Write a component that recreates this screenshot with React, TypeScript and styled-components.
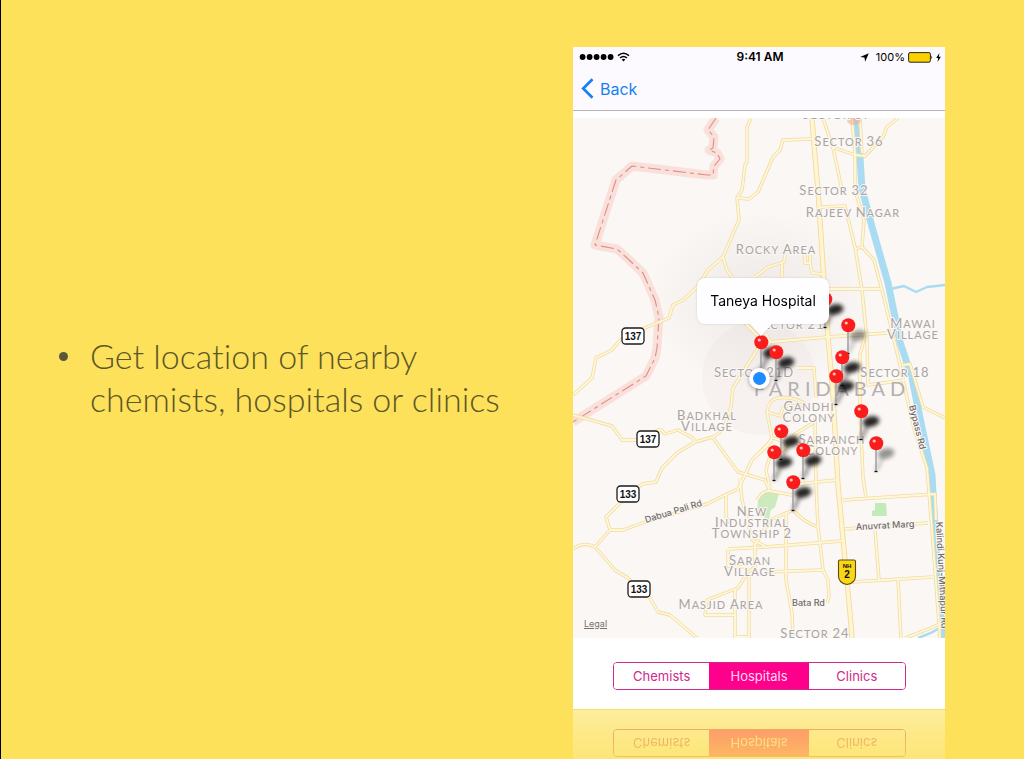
import React, { useState } from "react";
import styled, { createGlobalStyle } from "styled-components";

const GlobalStyle = createGlobalStyle`
  *, *::before, *::after { box-sizing: border-box; }
  html, body { margin: 0; padding: 0; }
  body { background: #fde15b; }
  button { font: inherit; }
`;

const Slide = styled.main`
  display: grid;
  grid-template-columns: minmax(0, 1fr) minmax(0, 372px);
  height: 100vh;
  padding: 47px 79px 0 0;
  overflow: hidden;
  background: #fde15b;
  border-left: 1px solid #000;
`;

const Points = styled.ul`
  align-self: center;
  margin: 0;
  padding: 0 24px 0 58px;
  list-style: none;
`;

const Point = styled.li`
  display: flex;
  gap: 22px;
  padding-bottom: 74px;
  color: #5c5628;
  font: 300 34px/43px Lato, sans-serif;
  font-variant-ligatures: none;
`;

const Bullet = styled.span`
  flex: none;
  width: 9px;
  height: 9px;
  margin-top: 18px;
  border-radius: 50%;
  background: #5b583a;
`;

const PointText = styled.p`
  margin: 0;
  max-width: 450px;
`;

const PhoneColumn = styled.div`
  display: flex;
  flex-direction: column;
`;

const Phone = styled.section`
  flex: none;
  background: #fff;
  font-family: Inter, sans-serif;
`;

const TopBar = styled.header`
  height: 64px;
  background: #fcfafe;
  border-bottom: 1px solid #b5b2b8;
`;

const StatusBar = styled.div`
  display: grid;
  grid-template-columns: 1fr auto 1fr;
  align-items: center;
  height: 20px;
  padding: 0 4px 0 6px;
  color: #000;
`;

const StatusGroup = styled.div<{ $end?: boolean }>`
  display: flex;
  align-items: center;
  justify-content: ${(p) => (p.$end ? "flex-end" : "flex-start")};
  gap: 3px;
`;

const Clock = styled.time`
  font-size: 12px;
  line-height: 20px;
  font-weight: 600;
`;

const Percent = styled.span`
  padding-left: 4px;
  font-size: 11px;
  line-height: 20px;
`;

const BackButton = styled.button`
  display: flex;
  align-items: center;
  gap: 6px;
  height: 43px;
  padding: 0 8px;
  border: 0;
  background: none;
  color: #1680f6;
  font-size: 16px;
`;

const MapArea = styled.div`
  position: relative;
  height: 520px;
  margin-top: 7px;
  overflow: hidden;
  background: #fbf7f4;
`;

const MapDrawing = styled.svg`
  display: block;
  width: 372px;
  height: 520px;
`;

const PinButton = styled.button<{ $x: number; $y: number }>`
  position: absolute;
  left: ${(p) => p.$x - 8}px;
  top: ${(p) => p.$y - 8}px;
  width: 34px;
  height: 40px;
  padding: 0;
  border: 0;
  background: none;

  svg { display: block; }
`;

const Callout = styled.div`
  position: absolute;
  left: 124px;
  top: 160px;
  display: flex;
  align-items: center;
  justify-content: center;
  width: 132px;
  height: 46px;
  padding-bottom: 2px;
  border-radius: 8px;
  background: #fefdff;
  color: #000;
  font-size: 14px;
  filter: drop-shadow(0 0 1px rgba(80, 70, 60, 0.2));

  &::after {
    content: "";
    position: absolute;
    top: 100%;
    left: 53px;
    border: 11px solid transparent;
    border-top: 12px solid #fefdff;
    border-bottom: 0;
  }
`;

const UserDot = styled.span`
  position: absolute;
  left: 176px;
  top: 250px;
  width: 21px;
  height: 21px;
  border: 4px solid #fff;
  border-radius: 50%;
  background: #1e8cff;
  box-shadow: 0 1px 4px rgba(0, 0, 0, 0.35);
`;

const LegalLink = styled.a`
  position: absolute;
  left: 11px;
  bottom: 8px;
  color: #77726e;
  font-size: 9px;
  line-height: 13px;
`;

const Footer = styled.div`
  display: flex;
  justify-content: center;
  height: 71px;
  padding: 24px 39px 0 40px;
  background: #fff;
  font-family: Inter, sans-serif;
`;

const Segments = styled.div`
  display: grid;
  grid-template-columns: 96fr 100fr 97fr;
  width: 100%;
  height: 28px;
  overflow: hidden;
  border: 1px solid #d0298c;
  border-radius: 4px;
`;

const Segment = styled.button<{ $active: boolean }>`
  padding: 0;
  border: 0;
  background: ${(p) => (p.$active ? "#ff008c" : "#fff")};
  color: ${(p) => (p.$active ? "#ffd9ef" : "#d0298c")};
  font-size: 13px;
  line-height: 26px;
`;

const Reflection = styled.div`
  flex: none;
  border-bottom: 1px solid #efd978;
  transform: scaleY(-1);
  mask-image: linear-gradient(to top, rgba(0, 0, 0, 0.42), rgba(0, 0, 0, 0.3) 28%, rgba(0, 0, 0, 0.18) 68%, rgba(0, 0, 0, 0.1));
`;

/* The map uses its own coordinate space, starting at 573,118. */
const ORIGIN_X = 573;
const ORIGIN_Y = 118;

const roads = [
  "M751 118L747 127V162L745 165L742 190L737 198L739 220L723 257L708 270L697 287L683 300L673 305L669 318L647 327L620 340L612 350L596 358L592 378L573 395",
  "M737 198L749 199L758 192L773 157L780 150L783 140L813 139",
  "M723 257L727 270L732 277L745 323L760 338L757 350L733 388L731 407L725 425Q720 434 713 437L695 442L677 453L662 468L656 482L642 484L618 505L606 517L610 530L595 547",
  "M610 530H623L645 522L707 504L725 495L738 489L745 475L752 460L772 440",
  "M573 549Q584 541 595 547L615 570L628 578L650 598L658 612L670 615L697 638",
  "M573 415L612 426L622 440H637L655 433Q659 426 665 434L678 430L693 438L695 442",
  "M713 438L738 472L765 480L770 491L792 495",
  "M755 457L768 445L772 438L767 412Q768 401 777 398Q792 396 804 403M767 412L780 416L783 408Q793 402 804 410",
  "M797 368L814 368L816 398",
  "M770 342L828 337L887 333M770 342L766 334",
  "M823 118L833 148L842 190M820 207L845 206L855 247L862 290L867 340L868 385L905 380M865 335L860 355V412L863 478L866 497",
  "M852 118L855 153V190L864 220L862 247L855 249M862 247L874 260L882 290L890 323L900 365L907 398L915 432L927 468L932 530L937 597L940 638",
  "M860 118L862 153M832 147L855 155L865 156L883 137L887 127L898 118",
  "M828 289H882",
  "M785 255L784 262L768 267L755 277M782 262V278M805 255V263H810L812 273L823 274M810 255V263",
  "M902 365L910 364L923 407L945 418",
  "M815 418L816 483L818 527L820 543L823 570L828 580L829 597L827 603",
  "M773 446L766 470L770 488M773 438L788 443L795 434L813 423M781 452L792 440L806 448",
  "M757 500Q763 490 770 491M793 510L770 520M793 510Q805 523 818 527M800 484L817 482L837 480",
  "M728 549L765 547L842 541M786 513V580L792 613L793 638M765 572L822 570",
  "M843 500L935 494L936 520M845 529L928 523M875 530L879 580M852 582L933 577M898 579L901 638M905 638Q924 631 940 624",
  "M740 478L742 500L746 515L752 540L765 546M726 495V517L731 524M728 549V566L748 567M755 543V567L748 572L738 588L707 600L705 615H735M749 577V637H735V590",
  "M770 520L755 545",
];
const highway =
  "M812 118L815 157L818 190L823 267L828 337L833 395L838 485L845 560L850 613L852 638";
const border =
  "M716 118L708 130L714 137L713 148L709 150L717 153L720 159L714 166L713 175H707L632 166L616 180L595 245L617 249L627 258L643 273L655 300L659 317L657 348L655 358L646 376L573 422";
const canal =
  "M854 118L860 157L862 190L865 200L872 227L888 283L895 317L900 342L912 378L920 418L932 475L935 530L938 580L943 638";

type Place = { x: number; y: number; lines: string[] };

const places: Place[] = [
  { x: 837, y: 119, lines: ["Sector 37"] },
  { x: 849, y: 146, lines: ["Sector 36"] },
  { x: 834, y: 195, lines: ["Sector 32"] },
  { x: 853, y: 217, lines: ["Rajeev Nagar"] },
  { x: 776, y: 254, lines: ["Rocky Area"] },
  { x: 790, y: 329, lines: ["Sector 21"] },
  { x: 913, y: 328, lines: ["Mawai", "Village"] },
  { x: 754, y: 377, lines: ["Sector 21D"] },
  { x: 895, y: 377, lines: ["Sector 18"] },
  { x: 707, y: 420, lines: ["Badkhal", "Village"] },
  { x: 809, y: 411, lines: ["Gandhi", "Colony"] },
  { x: 832, y: 444, lines: ["Sarpanch", "Colony"] },
  { x: 752, y: 516, lines: ["New", "Industrial", "Township 2"] },
  { x: 750, y: 565, lines: ["Saran", "Village"] },
  { x: 721, y: 609, lines: ["Masjid Area"] },
  { x: 815, y: 638, lines: ["Sector 24"] },
];

const PlaceText = styled.text<{ $city?: boolean }>`
  fill: ${(p) => (p.$city ? "#b4b0af" : "#a9a5a4")};
  stroke: #fbf7f4;
  stroke-width: ${(p) => (p.$city ? 0 : 2)}px;
  stroke-linejoin: round;
  paint-order: stroke;
  text-anchor: middle;
  font-family: Lato, sans-serif;
  font-size: ${(p) => (p.$city ? 20 : 11)}px;
  letter-spacing: ${(p) => (p.$city ? 5 : 1)}px;
`;

const Initial = styled.tspan`
  font-size: 13px;
`;

const RoadText = styled.text`
  fill: #6f6b68;
  stroke: #fbf7f4;
  stroke-width: 2px;
  paint-order: stroke;
  font-family: Inter, sans-serif;
  font-size: 9px;
  font-weight: 500;
`;

const ShieldText = styled.text<{ $size: number }>`
  fill: #111;
  text-anchor: middle;
  font-family: "Liberation Sans", sans-serif;
  font-size: ${(p) => p.$size}px;
  font-weight: 700;
`;

function PlaceLabel({ x, y, lines }: Place) {
  return (
    <>
      {lines.map((line, i) => (
        <PlaceText key={line} x={x} y={y + i * 11}>
          {line.split(" ").map((word, j) => (
            <React.Fragment key={word}>
              {j > 0 && " "}
              {/\d/.test(word) ? (
                <Initial>{word}</Initial>
              ) : (
                <>
                  <Initial>{word[0]}</Initial>
                  {word.slice(1).toUpperCase()}
                </>
              )}
            </React.Fragment>
          ))}
        </PlaceText>
      ))}
    </>
  );
}

function RouteBadge({ x, y, label }: { x: number; y: number; label: string }) {
  return (
    <g>
      <rect x={x - 11} y={y - 8} width="22" height="16" rx="3.5" fill="#fff" stroke="#1b1b1b" strokeWidth="1.3" />
      <ShieldText $size={10} x={x} y={y + 4}>{label}</ShieldText>
    </g>
  );
}

function CityMap() {
  return (
    <MapDrawing viewBox={`${ORIGIN_X} ${ORIGIN_Y} 372 520`} role="img" aria-label="Map of Faridabad">
      <defs>
        <radialGradient id="shade">
          <stop offset="0" stopColor="#8a7f78" stopOpacity="0.12" />
          <stop offset="1" stopColor="#8a7f78" stopOpacity="0" />
        </radialGradient>
      </defs>
      <ellipse cx="762" cy="300" rx="115" ry="90" fill="url(#shade)" />
      <circle cx="759" cy="378" r="57" fill="#8d8a92" fillOpacity="0.04" />
      <path d="M763 493L771 491L779 494L775 507L771 510L769 519L757 515L758 500Z" fill="#cdeabf" />
      <path d="M875 503H886L887 516H872L872 511L875 510Z" fill="#c3eab9" />
      <g fill="none" strokeLinejoin="round">
        <path d={border} stroke="#fae0da" strokeWidth="9" />
        <path d={border} stroke="#dc8f87" strokeWidth="1.1" strokeDasharray="13 4 4 4" />
        <path d={canal} stroke="#a9dcf2" strokeWidth="7" />
        <path d="M890 289L904 286L916 292L927 287L945 285" stroke="#a9dcf2" strokeWidth="2.4" />
        <path d="M918 638Q930 634 940 628" stroke="#a9dcf2" strokeWidth="2.5" />
        {roads.map((d) => (
          <path key={d} d={d} stroke="#f2dba2" strokeWidth="3.4" />
        ))}
        <path d={highway} stroke="#f2d79b" strokeWidth="5.2" />
        {roads.map((d) => (
          <path key={d} d={d} stroke="#fef8da" strokeWidth="1.8" />
        ))}
        <path d={highway} stroke="#fff6cf" strokeWidth="3.6" />
      </g>
      <ellipse cx="854" cy="121" rx="7" ry="4" fill="#f2a58c" fillOpacity="0.5" />
      {places.map((place) => (
        <PlaceLabel key={`${place.x}-${place.y}`} {...place} />
      ))}
      <PlaceText $city x="832" y="396">FARIDABAD</PlaceText>
      <RoadText transform="translate(646 523) rotate(-17)">Dabua Pali Rd</RoadText>
      <RoadText transform="translate(856 530) rotate(-3)">Anuvrat Marg</RoadText>
      <RoadText x="792" y="606">Bata Rd</RoadText>
      <RoadText transform="translate(909 406) rotate(76)">Bypass Rd</RoadText>
      <RoadText transform="translate(936 522) rotate(87)">Kalindi Kunj-Mithapur Rd</RoadText>
      <RouteBadge x={633} y={336} label="137" />
      <RouteBadge x={648} y={439} label="137" />
      <RouteBadge x={628} y={494} label="133" />
      <RouteBadge x={639} y={589} label="133" />
      <path d="M838.5 561.5Q838.5 560 840 560H854Q855.5 560 855.5 561.5V576Q855.5 583 847 584.5Q838.5 583 838.5 576Z" fill="#f9d616" stroke="#5c4a10" strokeWidth="1.1" />
      <ShieldText $size={6} x="847" y="568">NH</ShieldText>
      <ShieldText $size={10} x="847" y="578">2</ShieldText>
    </MapDrawing>
  );
}

const pins = [
  { name: "Hospital near Sector 21", x: 825, y: 299 },
  { name: "Hospital near Mawai Village", x: 848, y: 325, faint: true },
  { name: "Taneya Hospital", x: 761, y: 342 },
  { name: "Hospital near Sector 21D", x: 776, y: 352 },
  { name: "Hospital near Sector 18", x: 842, y: 357 },
  { name: "Hospital in Faridabad", x: 836, y: 376 },
  { name: "Hospital on Bypass Road", x: 861, y: 411 },
  { name: "Hospital in Gandhi Colony", x: 781, y: 431 },
  { name: "Hospital east of Sarpanch Colony", x: 876, y: 443, faint: true },
  { name: "Hospital in Sarpanch Colony", x: 803, y: 450 },
  { name: "Hospital west of Sarpanch Colony", x: 774, y: 452 },
  { name: "Hospital near New Industrial Township", x: 793, y: 482 },
];

function Pin({ name, x, y, faint }: { name: string; x: number; y: number; faint?: boolean }) {
  return (
    <PinButton type="button" aria-label={name} $x={x - ORIGIN_X} $y={y - ORIGIN_Y}>
      <svg width="34" height="40" viewBox="0 0 34 40" aria-hidden="true">
        <g filter="url(#pin-shadow)" opacity={faint ? 0.4 : 0.85}>
          <path d="M8 36L16 20" stroke="#000" strokeWidth="3" opacity="0.6" />
          <ellipse cx="18" cy="18.5" rx="8.5" ry="5.2" transform="rotate(-12 18 18.5)" />
        </g>
        <path d="M8 14V36" stroke="#a3a3a8" strokeWidth="1.6" />
        <path d="M6.5 36.5H9.5" stroke="#111" strokeWidth="1.3" />
        <circle cx="8.3" cy="8.3" r="7" fill="#fb1c1c" />
        <circle cx="6.2" cy="6" r="1.6" fill="#ffc4c0" />
      </svg>
    </PinButton>
  );
}

const PinDefs = styled.svg`
  position: absolute;
  width: 0;
  height: 0;
`;

const kinds = ["Chemists", "Hospitals", "Clinics"];

function KindPicker({ value, onPick }: { value: string; onPick: (kind: string) => void }) {
  return (
    <Footer>
      <Segments role="group" aria-label="Kind of place">
        {kinds.map((kind) => (
          <Segment key={kind} type="button" $active={kind === value} aria-pressed={kind === value} onClick={() => onPick(kind)}>
            {kind}
          </Segment>
        ))}
      </Segments>
    </Footer>
  );
}

function Status() {
  return (
    <StatusBar>
      <StatusGroup>
        <svg width="35" height="8" viewBox="0 0 35 8" aria-label="Full signal">
          {[3, 10, 17, 24, 31].map((cx) => (
            <circle key={cx} cx={cx + 0.6} cy="4" r="2.9" />
          ))}
        </svg>
        <svg width="13" height="10" viewBox="0 0 13 10" aria-label="Wi-Fi">
          <path d="M1 3.6Q6.5 -1 12 3.6M3.1 5.9Q6.5 3 9.9 5.9" fill="none" stroke="#000" strokeWidth="1.5" />
          <path d="M4.7 7.5Q6.5 6 8.3 7.5L6.5 9.4Z" />
        </svg>
      </StatusGroup>
      <Clock>9:41 AM</Clock>
      <StatusGroup $end>
        <svg width="9" height="9" viewBox="0 0 9 9" aria-label="Location in use">
          <path d="M8.8 .3L5.1 8.8L4.5 4.6L.2 4.1Z" />
        </svg>
        <Percent>100%</Percent>
        <svg width="25" height="11" viewBox="0 0 25 11" aria-label="Battery full">
          <rect x=".6" y=".6" width="21.8" height="9.6" rx="1.5" fill="#fbd000" stroke="#222" strokeWidth="1" />
          <path d="M23.4 3.6Q25 5.4 23.4 7.2Z" />
        </svg>
        <svg width="5" height="9" viewBox="0 0 5 9" aria-label="Charging">
          <path d="M3.4 0L.2 5H2.2L1.5 9L4.9 3.7H2.8Z" />
        </svg>
      </StatusGroup>
    </StatusBar>
  );
}

export default function App() {
  const [kind, setKind] = useState("Hospitals");

  return (
    <>
      <GlobalStyle />
      <Slide>
        <Points>
          <Point>
            <Bullet />
            <PointText>Get location of nearby chemists, hospitals or clinics</PointText>
          </Point>
        </Points>
        <PhoneColumn>
          <Phone>
            <TopBar>
              <Status />
              <BackButton type="button">
                <svg width="13" height="21" viewBox="0 0 13 21" aria-hidden="true">
                  <path d="M11.5 1.2L2.2 10.5L11.5 19.8" fill="none" stroke="currentColor" strokeWidth="2.7" />
                </svg>
                Back
              </BackButton>
            </TopBar>
            <MapArea>
              <CityMap />
              <PinDefs aria-hidden="true">
                <filter id="pin-shadow" x="-50%" y="-50%" width="200%" height="200%">
                  <feGaussianBlur stdDeviation="2" />
                </filter>
              </PinDefs>
              {pins.map((pin) => (
                <Pin key={pin.name} {...pin} />
              ))}
              <UserDot />
              <Callout>Taneya Hospital</Callout>
              <LegalLink href="#legal">Legal</LegalLink>
            </MapArea>
            <KindPicker value={kind} onPick={setKind} />
          </Phone>
          <Reflection aria-hidden="true" inert>
            <KindPicker value={kind} onPick={setKind} />
          </Reflection>
        </PhoneColumn>
      </Slide>
    </>
  );
}
